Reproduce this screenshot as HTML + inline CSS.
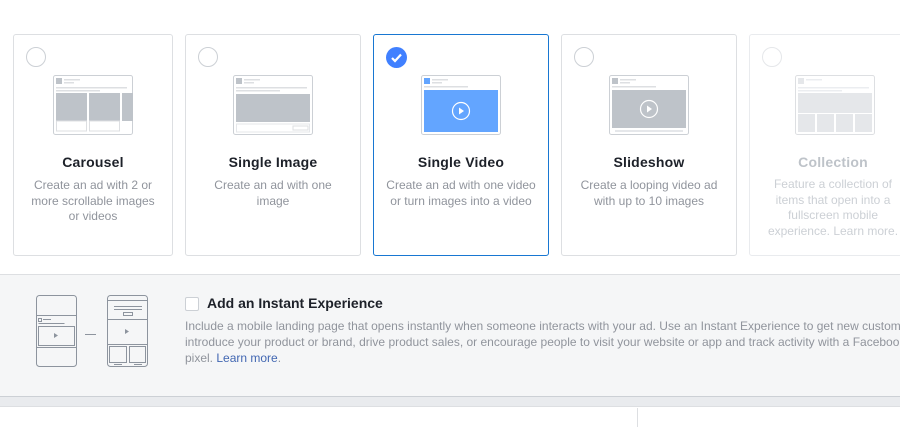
<!DOCTYPE html>
<html><head><style>
*{margin:0;padding:0;box-sizing:border-box}
body{width:900px;height:427px;overflow:hidden;background:#fff;font-family:"Liberation Sans",Arial,sans-serif;position:relative}
.card{position:absolute;top:34px;height:222px;border:1px solid #dddfe2;border-radius:3px;background:#fff;text-align:center}
.card.sel{border-color:#1877d2}
.radio{position:absolute;left:12px;top:12px;width:20px;height:20px;border:1px solid #ccd0d5;border-radius:50%}
.ill{position:absolute;top:40px;left:50%;margin-left:-40px;width:80px;height:60px}
.t{position:absolute;top:119px;left:0;right:0;font-size:14px;font-weight:bold;color:#1d2129;letter-spacing:.2px}
.d{position:absolute;top:143px;left:0;right:0;font-size:12px;line-height:15.5px;color:#90949c;white-space:nowrap}
.dis .t{color:#bec3c9}.dis .d{color:#ccd0d5}.dis .radio{border-color:#e5e7ea}
.panel{position:absolute;left:0;top:274px;width:900px;height:123px;background:#f5f6f7;border-top:1px solid #dddfe2;border-bottom:1px solid #ccd0d5}
.strip{position:absolute;left:0;top:397px;width:900px;height:10px;background:#e9ebee;border-bottom:1px solid #dddfe2}
</style></head><body>

<div class="card" style="left:13px;width:160px">
<div class="radio"></div>
<svg class="ill" viewBox="0 0 80 60"><rect x=".5" y=".5" width="79" height="59" rx="2" fill="#fff" stroke="#ccd0d5"/><rect x="3" y="3" width="6" height="6" fill="#bec3c9"/><rect x="11" y="4" width="16" height="1.5" fill="#dddfe2"/><rect x="11" y="7" width="10" height="1.5" fill="#dddfe2"/><rect x="3" y="12" width="71" height="1.5" fill="#dddfe2"/><rect x="3" y="15" width="44" height="1.5" fill="#dddfe2"/><rect x="3" y="18" width="31" height="28" fill="#bec3c9"/><rect x="36" y="18" width="31" height="28" fill="#bec3c9"/><rect x="69" y="18" width="11" height="28" fill="#bec3c9"/><rect x="3.5" y="46" width="30" height="10" fill="none" stroke="#dddfe2"/><rect x="36.5" y="46" width="30" height="10" fill="none" stroke="#dddfe2"/></svg>
<div class="t">Carousel</div>
<div class="d">Create an ad with 2 or<br>more scrollable images<br>or videos</div>
</div>

<div class="card" style="left:185px;width:176px">
<div class="radio"></div>
<svg class="ill" viewBox="0 0 80 60"><rect x=".5" y=".5" width="79" height="59" rx="2" fill="#fff" stroke="#ccd0d5"/><rect x="3" y="3" width="6" height="6" fill="#bec3c9"/><rect x="11" y="4" width="16" height="1.5" fill="#dddfe2"/><rect x="11" y="7" width="10" height="1.5" fill="#dddfe2"/><rect x="3" y="12" width="71" height="1.5" fill="#dddfe2"/><rect x="3" y="15" width="44" height="1.5" fill="#dddfe2"/><rect x="3" y="19" width="74" height="28" fill="#bec3c9"/><rect x="3.5" y="49" width="73" height="8" fill="none" stroke="#e5e7ea"/><rect x="60" y="51" width="15" height="4" fill="none" stroke="#dddfe2"/></svg>
<div class="t">Single Image</div>
<div class="d">Create an ad with one<br>image</div>
</div>

<div class="card sel" style="left:373px;width:176px">
<svg style="position:absolute;left:12px;top:12px" width="21" height="21" viewBox="0 0 21 21"><circle cx="10.5" cy="10.5" r="10.5" fill="#4080ff"/><path d="M6 11l3 3 6-6.5" stroke="#fff" stroke-width="2.2" fill="none"/></svg>
<svg class="ill" viewBox="0 0 80 60"><rect x=".5" y=".5" width="79" height="59" rx="2" fill="#fff" stroke="#ccd0d5"/><rect x="3" y="3" width="6" height="6" fill="#63a5ff"/><rect x="11" y="4" width="16" height="1.5" fill="#dddfe2"/><rect x="11" y="7" width="10" height="1.5" fill="#dddfe2"/><rect x="3" y="11" width="44" height="1.5" fill="#dddfe2"/><rect x="3" y="15" width="74" height="42" fill="#63a5ff"/><circle cx="40" cy="36" r="8.5" fill="none" stroke="#fff" stroke-width="1.2"/><path d="M38 32.5v7l5-3.5z" fill="#fff"/></svg>
<div class="t">Single Video</div>
<div class="d">Create an ad with one video<br>or turn images into a video</div>
</div>

<div class="card" style="left:561px;width:176px">
<div class="radio"></div>
<svg class="ill" viewBox="0 0 80 60"><rect x=".5" y=".5" width="79" height="59" rx="2" fill="#fff" stroke="#ccd0d5"/><rect x="3" y="3" width="6" height="6" fill="#bec3c9"/><rect x="11" y="4" width="16" height="1.5" fill="#dddfe2"/><rect x="11" y="7" width="10" height="1.5" fill="#dddfe2"/><rect x="3" y="11" width="44" height="1.5" fill="#dddfe2"/><rect x="3" y="15" width="74" height="38" fill="#bec3c9"/><circle cx="40" cy="34" r="8.5" fill="none" stroke="#fff" stroke-width="1.2"/><path d="M38 30.5v7l5-3.5z" fill="#fff"/><rect x="6" y="55" width="68" height="2" fill="#e5e7ea"/></svg>
<div class="t">Slideshow</div>
<div class="d">Create a looping video ad<br>with up to 10 images</div>
</div>

<div class="card dis" style="left:749px;width:176px;border-color:#e9ebee">
<div class="radio"></div>
<svg class="ill" style="margin-left:-42px" viewBox="0 0 80 60"><rect x=".5" y=".5" width="79" height="59" rx="2" fill="#fff" stroke="#dddfe2"/><rect x="3" y="3" width="6" height="6" fill="#e5e7ea"/><rect x="11" y="4" width="16" height="1.5" fill="#ebedf0"/><rect x="3" y="12" width="71" height="1.5" fill="#ebedf0"/><rect x="3" y="15" width="44" height="1.5" fill="#ebedf0"/><rect x="3" y="18" width="74" height="20" fill="#e5e7ea"/><rect x="3" y="39" width="17" height="18" fill="#e5e7ea"/><rect x="22" y="39" width="17" height="18" fill="#e5e7ea"/><rect x="41" y="39" width="17" height="18" fill="#e5e7ea"/><rect x="60" y="39" width="17" height="18" fill="#e5e7ea"/></svg>
<div class="t" style="left:-4px;right:4px">Collection</div>
<div class="d" style="left:-4px;right:4px;top:142px">Feature a collection of<br>items that open into a<br>fullscreen mobile<br>experience. Learn more.</div>
</div>

<div class="panel">
<svg style="position:absolute;left:36px;top:20px" width="115" height="74" viewBox="0 0 115 74"><g fill="none" stroke="#8d949e" stroke-width="1"><rect x=".5" y=".5" width="40" height="71" rx="3"/><path d="M.5 20.5h40M.5 52.5h40"/><rect x="2.5" y="23.5" width="3" height="3"/><path d="M7 24.5h8M2.5 28.5h26"/><rect x="2.5" y="31.5" width="36" height="19"/><path d="M49 39.5h11"/><rect x="71.5" y=".5" width="40" height="71" rx="3"/><path d="M71.5 5.5h40M78 11.5h28M78 14.5h28"/><rect x="87.5" y="17.5" width="9" height="3"/><path d="M71.5 24.5h40M71.5 49.5h40"/><rect x="73.5" y="51.5" width="17" height="16"/><rect x="93.5" y="51.5" width="16" height="16"/><path d="M78 69.5h8M98 69.5h8"/></g><path d="M18 38v5l4-2.5z M89 34v5l4-2.5z" fill="#8d949e"/></svg>
<div style="position:absolute;left:185px;top:22px;width:14px;height:14px;border:1px solid #ccd0d5;border-radius:2px;background:#fff"></div>
<div style="position:absolute;left:207px;top:20px;font-size:14px;font-weight:bold;color:#1d2129">Add an Instant Experience</div>
<div style="position:absolute;left:185px;top:43px;width:760px;font-size:12px;line-height:16px;color:#90949c;white-space:nowrap">Include a mobile landing page that opens instantly when someone interacts with your ad. Use an Instant Experience to get new customers,<br>introduce your product or brand, drive product sales, or encourage people to visit your website or app and track activity with a Facebook<br>pixel. <span style="color:#4267b2">Learn more</span>.</div>
</div>
<div class="strip"></div>
<div style="position:absolute;left:637px;top:408px;width:1px;height:19px;background:#dddfe2"></div>
</body></html>
